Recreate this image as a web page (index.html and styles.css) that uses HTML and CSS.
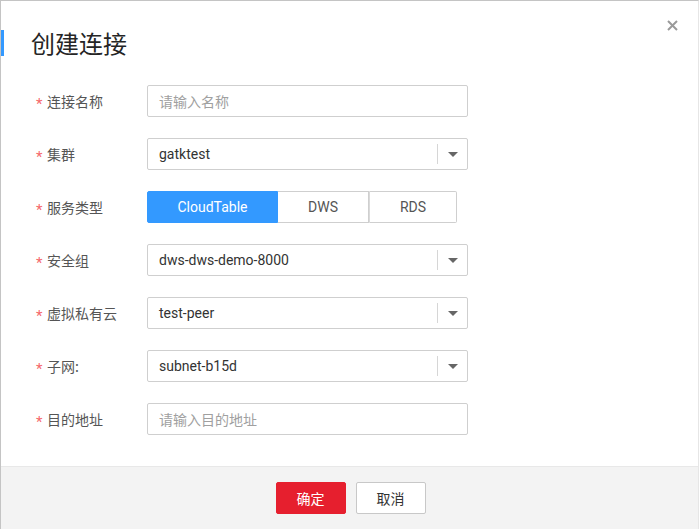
FILE: index.html
```html
<!DOCTYPE html>
<html lang="zh">
<head>
<meta charset="utf-8">
<title>创建连接</title>
<link rel="stylesheet" href="styles.css">
</head>
<body>
<div class="dialog">
  <div class="header">
    <h1 class="title">创建连接</h1>
    <button class="close" aria-label="关闭">
      <svg width="11" height="11" viewBox="0 0 11 11"><path d="M1 1L10 10M10 1L1 10" stroke="#9a9a9a" stroke-width="2" fill="none"/></svg>
    </button>
  </div>
  <div class="form">
    <div class="row">
      <label class="label"><span class="star">*</span>连接名称</label>
      <div class="input placeholder">请输入名称</div>
    </div>
    <div class="row">
      <label class="label"><span class="star">*</span>集群</label>
      <div class="input select"><span class="value">gatktest</span><span class="arrow"></span></div>
    </div>
    <div class="row">
      <label class="label"><span class="star">*</span>服务类型</label>
      <div class="segmented">
        <span class="seg seg-active">CloudTable</span>
        <span class="seg seg-dws">DWS</span>
        <span class="seg seg-rds">RDS</span>
      </div>
    </div>
    <div class="row">
      <label class="label"><span class="star">*</span>安全组</label>
      <div class="input select"><span class="value">dws-dws-demo-8000</span><span class="arrow"></span></div>
    </div>
    <div class="row">
      <label class="label"><span class="star">*</span>虚拟私有云</label>
      <div class="input select"><span class="value">test-peer</span><span class="arrow"></span></div>
    </div>
    <div class="row">
      <label class="label"><span class="star">*</span>子网:</label>
      <div class="input select"><span class="value">subnet-b15d</span><span class="arrow"></span></div>
    </div>
    <div class="row">
      <label class="label"><span class="star">*</span>目的地址</label>
      <div class="input placeholder">请输入目的地址</div>
    </div>
  </div>
  <div class="footer">
    <button class="btn btn-primary">确定</button>
    <button class="btn btn-default">取消</button>
  </div>
</div>
</body>
</html>
```
FILE: styles.css
```css
* { box-sizing: border-box; }
html, body { margin: 0; padding: 0; background: #fff; }
body {
  font-family: Roboto, "Noto Sans CJK SC", sans-serif;
  color: #333;
}
.dialog {
  width: 699px;
  height: 529px;
  border: 1px solid #c4c4c4;
  border-right-color: #e6e6e6;
  border-bottom: none;
  display: flex;
  flex-direction: column;
  background: #fff;
}
.header {
  position: relative;
  padding-top: 29px;
  height: 83px;
}
.title {
  margin: 0;
  font-weight: normal;
  font-size: 24px;
  line-height: 26px;
  color: #252525;
  padding-left: 27px;
  border-left: 3px solid #3399ff;
  font-family: "Noto Sans CJK SC", sans-serif;
}
.close {
  position: absolute;
  top: 19px;
  right: 20px;
  border: none;
  background: none;
  padding: 0;
  width: 11px;
  height: 11px;
  display: flex;
}
.form {
  display: flex;
  flex-direction: column;
  gap: 21px;
  padding-left: 35px;
  height: 382px;
  padding-top: 1px;
}
.row {
  display: flex;
  align-items: center;
  height: 32px;
}
.label {
  width: 111px;
  font-size: 14px;
  color: #555;
  font-family: "Noto Sans CJK SC", sans-serif;
  display: flex;
  align-items: center;
}
.star {
  color: #f5676c;
  font-family: Roboto, sans-serif;
  font-size: 15px;
  width: 11px;
  position: relative;
  top: 3px;
}
.input {
  width: 321px;
  height: 32px;
  border: 1px solid #cfcfcf;
  border-radius: 2px;
  display: flex;
  align-items: center;
  padding-left: 11px;
  font-size: 14px;
  color: #333;
}
.placeholder {
  color: #a0a0a0;
  font-family: "Noto Sans CJK SC", sans-serif;
}
.select .value { flex: 1; }
.arrow {
  width: 30px;
  height: 20px;
  border-left: 1px solid #d6d6d6;
  display: flex;
  align-items: center;
  justify-content: center;
}
.arrow::after {
  content: "";
  width: 0;
  height: 0;
  border-left: 5px solid transparent;
  border-right: 5px solid transparent;
  border-top: 5px solid #666;
}
.segmented {
  display: flex;
  height: 32px;
  width: 310px;
}
.seg {
  display: flex;
  align-items: center;
  justify-content: center;
  font-size: 14px;
  color: #555;
  border: 1px solid #cfcfcf;
  height: 32px;
}
.seg-active {
  width: 131px;
  background: #3399ff;
  border-color: #3399ff;
  color: #fff;
  border-radius: 2px 0 0 2px;
}
.seg-dws { width: 91px; border-left: none; }
.seg-rds { width: 88px; border-left: 1px solid #dadada; border-radius: 0 2px 2px 0; }
.footer {
  flex: 1;
  background: #f3f3f3;
  border-top: 1px solid #e8e8e8;
  display: flex;
  justify-content: center;
  gap: 10px;
  padding-top: 15px;
  padding-left: 2px;
}
.btn {
  width: 70px;
  height: 32px;
  font-size: 14px;
  font-family: "Noto Sans CJK SC", sans-serif;
  border-radius: 2px;
  padding: 0;
  cursor: pointer;
}
.btn-primary {
  background: #e61f2e;
  border: 1px solid #e61f2e;
  color: #fff;
}
.btn-default {
  background: #fff;
  border: 1px solid #c8c8c8;
  color: #333;
}
```
